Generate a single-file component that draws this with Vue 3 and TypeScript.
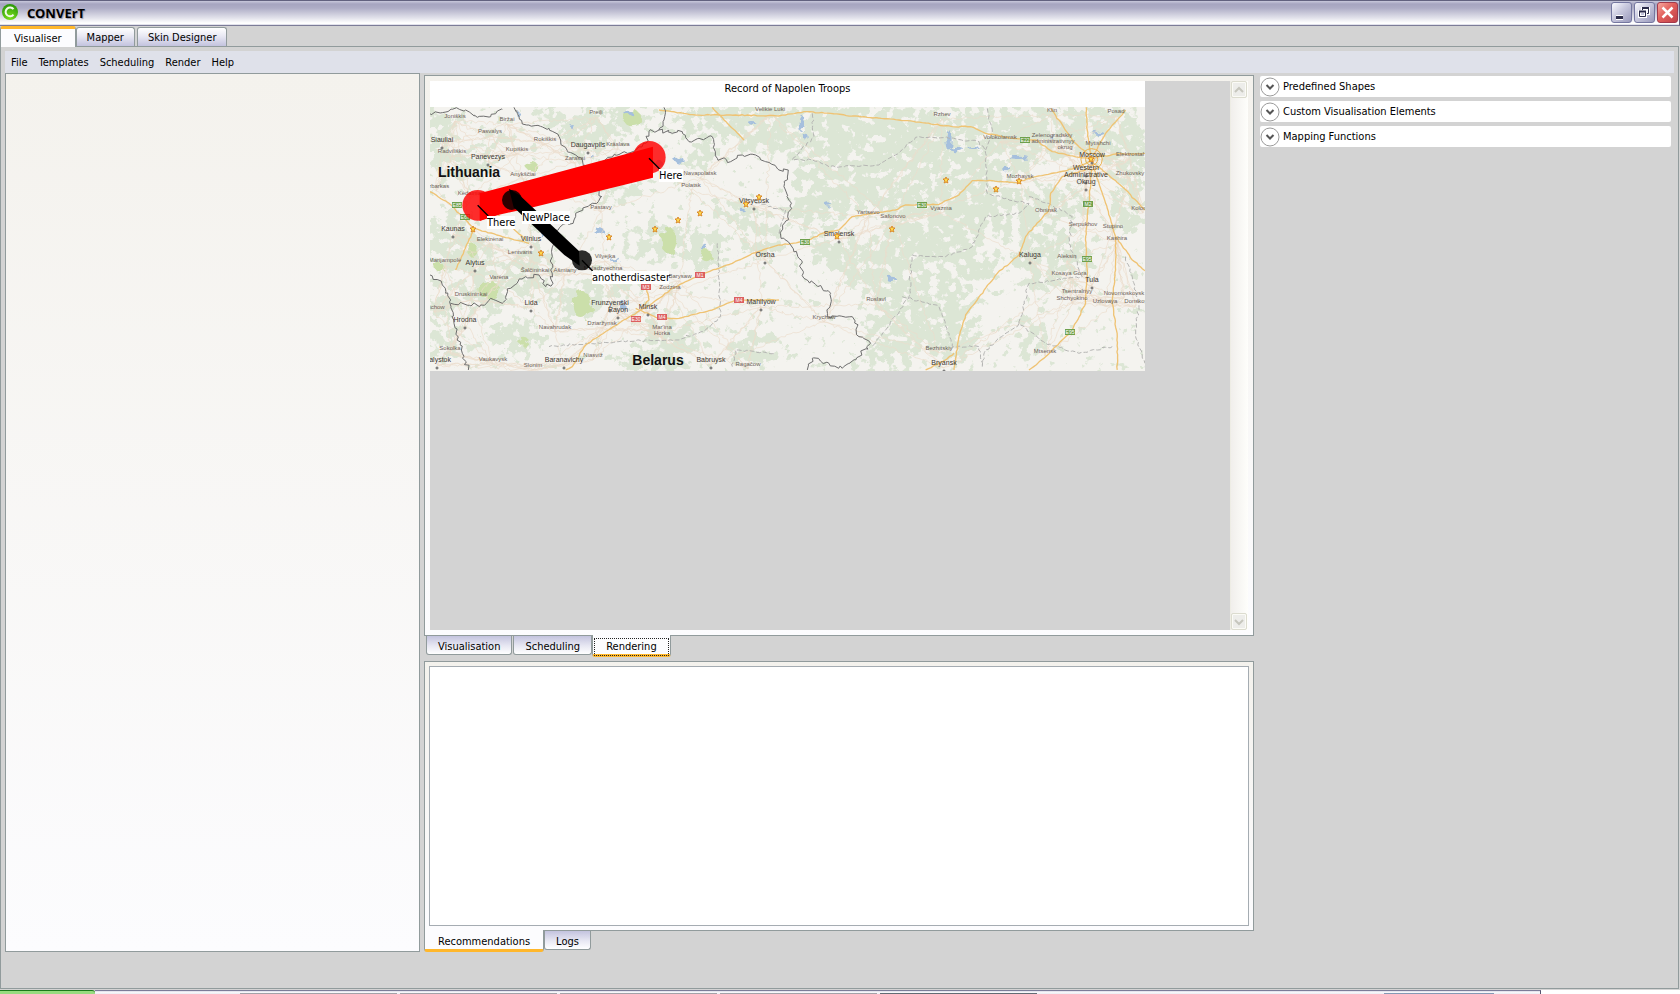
<script setup lang="ts">
import { ref } from 'vue'

interface Place { x: number; y: number; name: string; major?: boolean }
type Point = [number, number]

const pageTabs = ['Visualiser', 'Mapper', 'Skin Designer']
const pageTab = ref('Visualiser')
const menus = ['File', 'Templates', 'Scheduling', 'Render', 'Help']
const viewTabs = ['Visualisation', 'Scheduling', 'Rendering']
const viewTab = ref('Rendering')
const outputTabs = ['Recommendations', 'Logs']
const outputTab = ref('Recommendations')
const groups = ['Predefined Shapes', 'Custom Visualisation Elements', 'Mapping Functions']
const taskSlots = [1, 2, 3, 4, 5]
const notes = ref('')

const places: Place[] = [
  { x: 25, y: 11, name: 'Joniškis' }, { x: 77, y: 14, name: 'Biržai' }, { x: 60, y: 26, name: 'Pasvalys' },
  { x: 12, y: 35, name: 'Siauliai', major: true }, { x: 22, y: 46, name: 'Radviliškis' },
  { x: 58, y: 52, name: 'Panevezys', major: true }, { x: 115, y: 34, name: 'Rokiškis' },
  { x: 87, y: 44, name: 'Kupiškis' }, { x: 158, y: 40, name: 'Daugavpils', major: true },
  { x: 188, y: 39, name: 'Krāslava' }, { x: 145, y: 53, name: 'Zarasai' }, { x: 93, y: 69, name: 'Anykščiai' },
  { x: 166, y: 7, name: 'Preiļi' }, { x: 6, y: 81, name: 'Jurbarkas' }, { x: 40, y: 88, name: 'Kėdainiai' },
  { x: 23, y: 124, name: 'Kaunas', major: true }, { x: 60, y: 134, name: 'Elektrėnai' },
  { x: 101, y: 134, name: 'Vilnius', major: true }, { x: 90, y: 147, name: 'Lentvaris' },
  { x: 15, y: 155, name: 'Marijampolė' }, { x: 45, y: 158, name: 'Alytus', major: true },
  { x: 105, y: 165, name: 'Šalčininkai' }, { x: 135, y: 165, name: 'Ašmiany' }, { x: 69, y: 172, name: 'Varėna' },
  { x: 41, y: 189, name: 'Druskininkai' }, { x: 101, y: 198, name: 'Lida', major: true },
  { x: 35, y: 215, name: 'Hrodna', major: true }, { x: 4, y: 202, name: 'Suchow' },
  { x: 20, y: 243, name: 'Sokolka' }, { x: 7, y: 255, name: 'Bialystok', major: true },
  { x: 63, y: 254, name: 'Vaukavysk' }, { x: 103, y: 260, name: 'Slonim' },
  { x: 134, y: 255, name: 'Baranavichy', major: true }, { x: 163, y: 250, name: 'Niasviž' },
  { x: 125, y: 222, name: 'Navahrudak' }, { x: 172, y: 218, name: 'Dziaržynsk' },
  { x: 180, y: 198, name: 'Frunzyenski', major: true }, { x: 188, y: 205, name: 'Rayon', major: true },
  { x: 218, y: 202, name: 'Minsk', major: true }, { x: 232, y: 222, name: "Mar'ina" }, { x: 232, y: 228, name: 'Horka' },
  { x: 240, y: 182, name: 'Zodzina' }, { x: 250, y: 171, name: 'Barysaw' }, { x: 173, y: 163, name: 'Maladzyechna' },
  { x: 175, y: 151, name: 'Vilyejka' }, { x: 171, y: 102, name: 'Pastavy' }, { x: 270, y: 68, name: 'Navapolatsk' },
  { x: 261, y: 80, name: 'Polatsk' }, { x: 324, y: 96, name: 'Vitsyebsk', major: true },
  { x: 335, y: 150, name: 'Orsha', major: true }, { x: 331, y: 197, name: 'Mahilyow', major: true },
  { x: 281, y: 255, name: 'Babruysk', major: true }, { x: 318, y: 259, name: 'Ragačow' },
  { x: 340, y: 4, name: 'Velikie Luki' }, { x: 512, y: 9, name: 'Rzhev' }, { x: 570, y: 32, name: 'Volokolamsk' },
  { x: 622, y: 30, name: 'Zelenogradskiy' }, { x: 623, y: 36, name: 'administrativnyy' }, { x: 635, y: 42, name: 'okrug' },
  { x: 668, y: 38, name: 'Mytishchi' }, { x: 662, y: 50, name: 'Moscow', major: true },
  { x: 656, y: 63, name: 'Western', major: true }, { x: 656, y: 70, name: 'Administrative', major: true },
  { x: 656, y: 77, name: 'Okrug', major: true }, { x: 700, y: 49, name: 'Elektrostal' },
  { x: 700, y: 68, name: 'Zhukovsky' }, { x: 590, y: 71, name: 'Mozhaysk' }, { x: 511, y: 103, name: 'Vyazma' },
  { x: 438, y: 107, name: 'Yartsevo' }, { x: 463, y: 111, name: 'Safonovo' },
  { x: 409, y: 129, name: 'Smolensk', major: true }, { x: 616, y: 105, name: 'Obninsk' },
  { x: 653, y: 119, name: 'Serpukhov' }, { x: 683, y: 121, name: 'Stupino' }, { x: 687, y: 133, name: 'Kashira' },
  { x: 600, y: 150, name: 'Kaluga', major: true }, { x: 637, y: 151, name: 'Aleksin' },
  { x: 639, y: 168, name: 'Kosaya Gora' }, { x: 662, y: 175, name: 'Tula', major: true },
  { x: 647, y: 186, name: 'Tsentralnyy' }, { x: 642, y: 193, name: 'Shchyokino' },
  { x: 694, y: 188, name: 'Novomoskovsk' }, { x: 675, y: 196, name: 'Uzlovaya' }, { x: 706, y: 196, name: 'Donskoy' },
  { x: 446, y: 194, name: 'Roslavl' }, { x: 394, y: 212, name: 'Krychaw' }, { x: 509, y: 243, name: 'Bezhitskiy' },
  { x: 514, y: 258, name: 'Bryansk', major: true }, { x: 615, y: 246, name: 'Mtsensk' },
  { x: 713, y: 103, name: 'Kolomna' }, { x: 622, y: 5, name: 'Klin' }, { x: 686, y: 6, name: 'Posad' },
]

const stars: Point[] = [
  [43, 122], [111, 146], [179, 130], [225, 122], [248, 113], [270, 106], [316, 97], [329, 90],
  [407, 129], [462, 122], [516, 73], [566, 82], [589, 74], [661, 52],
]
const shields: { x: number; y: number; name: string; red?: boolean }[] = [
  { x: 27, y: 98, name: 'E85' }, { x: 35, y: 110, name: 'E67' },
  { x: 270, y: 168, name: 'M1', red: true }, { x: 216, y: 180, name: 'M3', red: true },
  { x: 206, y: 212, name: 'E30', red: true }, { x: 232, y: 210, name: 'M4', red: true },
  { x: 309, y: 193, name: 'M4', red: true }, { x: 375, y: 135, name: 'E30' }, { x: 492, y: 98, name: 'E30' },
  { x: 595, y: 33, name: 'E22' }, { x: 658, y: 97, name: 'M2' }, { x: 657, y: 152, name: 'E95' }, { x: 640, y: 225, name: 'E95' },
]

let seed = 7
function rand(): number {
  seed = (seed * 16807) % 2147483647
  return seed / 2147483647
}

// Roughens a polyline so that it reads as a surveyed line
function rough(points: Point[], amount: number): string {
  let d = `M${points[0][0]} ${points[0][1]}`
  for (let i = 1; i < points.length; i++) {
    const [ax, ay] = points[i - 1]
    const [bx, by] = points[i]
    const steps = Math.max(1, Math.round(Math.hypot(bx - ax, by - ay) / 9))
    for (let s = 1; s <= steps; s++) {
      const t = s / steps
      const k = s === steps ? 0 : amount
      d += `L${(ax + (bx - ax) * t + (rand() - 0.5) * k).toFixed(1)} ${(ay + (by - ay) * t + (rand() - 0.5) * k).toFixed(1)}`
    }
  }
  return d
}
function parse(s: string): Point[] {
  return s.split(' ').map((p) => p.split(',').map(Number) as Point)
}

const borders = [
  '33,130 70,128 100,118 140,120 175,142 215,140 250,118',
  '285,112 300,140 310,162 390,175 425,210 445,245 490,270 505,300 530,340 548,380 520,400 470,430 465,450 405,480 400,560 395,600 402,640 380,650 360,615 320,620 275,655 250,700 215,685 185,705 95,700',
  '735,112 735,150 720,180 690,185 680,220 650,240 570,262 530,290 495,285',
  '720,180 760,190 790,185 810,215 840,205 880,200 895,265 935,275 970,255 1010,255 1040,275 1080,300 1108,300 1095,350 1118,415 1085,495 1115,525 1140,565 1155,625 1235,670 1225,740 1300,740 1315,770 1320,800 1355,820 1310,870 1270,895 1230,880 1180,865 1165,900',
  '33,615 70,645 95,690 105,760 130,850 148,900',
].map((s) => rough(parse(s), 12))

const regions = [
  '1180,130 1185,200 1120,270 1180,270 1230,290 1380,285 1420,260 1500,200 1590,205 1680,215 1700,250 1705,370 1770,390 1830,400 1800,430 1700,440 1660,530 1580,560 1480,555 1470,680 1400,780 1360,830',
  '1450,680 1560,710 1590,790 1600,830 1680,830 1690,890',
  '1705,115 1720,180 1700,240', '1830,380 1890,400 1960,440 1950,520 1990,620 1830,640 1800,760 1880,820 1980,850 2080,830',
  '1800,760 1700,840 1690,890', '2120,560 2140,620 2160,700 2150,800 2178,880',
  '895,520 905,740 860,780 770,810 600,815 500,820 390,830', '1080,490 1100,420 1010,400', '940,890 950,840 1070,850',
].map((s) => rough(parse(s), 7))

const highways = [
  '720,120 830,135 950,135 1080,138 1155,125 1235,130 1300,138 1440,150 1510,158 1600,170 1655,170 1700,190 1780,205',
  '1780,205 1850,210 1900,245 1980,262 2010,265',
  '1080,525 1160,515 1210,490 1260,480 1300,440 1430,420 1460,405 1560,403 1620,375 1660,332 1720,332 1790,338 1850,320 1960,297 2010,275',
  '1080,525 1000,550 940,580 840,615 760,655 700,700 600,760 545,795 500,825 460,890 440,900',
  '650,715 720,745 780,745 880,720 950,690 1080,690', '680,640 690,690 665,712',
  '2000,300 1930,320 1895,370 1890,420 1820,500 1800,555 1735,610 1640,735 1620,800 1605,900',
  '1895,115 1960,210 2015,260', '2002,112 2005,180 2015,250', '2120,120 2060,190 2025,255', '2178,250 2090,252 2020,265',
  '2020,275 2110,350 2178,420', '2020,280 2060,400 2090,500 2090,600 2080,700 2095,800 2095,900',
  '2090,500 2140,570 2178,602', '2018,300 2010,400 2000,500 2005,600 2000,700 1960,780 1880,860 1830,900',
  '880,112 940,175 975,210', '33,365 90,400 165,475 250,500 330,520', '165,475 110,600', '200,400 320,510',
  '1605,850 1580,870 1520,900',
].map((s) => rough(parse(s), 3))

const toSheet = (x: number, y: number): Point => [x * 3 + 33, y * 3 + 111]

// Minor roads link every place with its nearest neighbours
const lanes: string[] = []
for (const a of places) {
  const near = places
    .filter((b) => b !== a)
    .sort((b, c) => Math.hypot(b.x - a.x, b.y - a.y) - Math.hypot(c.x - a.x, c.y - a.y))
  for (const k of [1, 3, 5, 7]) lanes.push(rough([toSheet(a.x, a.y + 3), toSheet(near[k].x, near[k].y + 3)], 10))
}

// Centre and radii of wooded areas
const woods: number[][] = [
  [70, 160, 60, 40], [60, 230, 40, 60], [140, 290, 90, 50], [230, 200, 60, 30], [90, 520, 90, 90], [170, 560, 70, 60],
  [200, 670, 90, 60], [60, 700, 60, 60], [330, 640, 80, 40], [420, 150, 90, 40], [560, 170, 80, 60], [640, 140, 60, 50],
  [480, 230, 60, 40], [600, 330, 80, 60], [860, 150, 100, 60], [1000, 150, 130, 60], [1040, 210, 80, 50], [850, 260, 60, 40],
  [720, 520, 100, 60], [860, 540, 70, 70], [480, 690, 80, 60], [600, 650, 70, 40], [280, 800, 100, 60], [70, 820, 60, 60],
  [760, 800, 100, 60], [700, 870, 120, 40], [1000, 830, 80, 60], [1030, 500, 60, 80], [950, 430, 60, 40], [340, 560, 70, 60],
  [1190, 180, 130, 90], [1350, 190, 160, 90], [1500, 190, 130, 80], [1250, 330, 130, 80], [1420, 330, 120, 90],
  [1600, 270, 120, 90], [1250, 400, 110, 50], [1560, 450, 170, 100], [1700, 410, 130, 80], [1490, 520, 120, 70],
  [1420, 620, 110, 80], [1330, 580, 80, 70], [1560, 690, 100, 70], [1450, 760, 120, 90], [1600, 790, 90, 90],
  [1660, 590, 90, 60], [1750, 240, 110, 90], [1880, 190, 120, 90], [2060, 190, 120, 90], [2140, 280, 70, 100],
  [1900, 400, 120, 60], [1850, 530, 80, 90], [1960, 560, 60, 70], [1870, 650, 60, 40], [2120, 430, 60, 60],
  [1400, 870, 90, 40], [1830, 800, 60, 50], [1230, 540, 70, 60], [1160, 430, 60, 50], [1720, 140, 120, 40],
]
const parks: number[][] = [
  [640, 145, 28, 24], [750, 512, 22, 40], [862, 556, 17, 18], [210, 660, 32, 28], [490, 705, 26, 42], [160, 540, 16, 20],
  [315, 815, 16, 12], [340, 290, 18, 14], [60, 590, 14, 12],
]
const lakes: number[][] = [
  [628, 128, 12, 6], [720, 282, 12, 10], [780, 270, 14, 8], [540, 482, 16, 10], [855, 530, 7, 12], [610, 705, 7, 18],
  [1148, 160, 9, 26], [1160, 200, 6, 9], [1590, 210, 8, 32], [1615, 240, 20, 7], [1665, 235, 16, 5], [1800, 262, 30, 5],
  [1765, 300, 12, 7], [1418, 628, 14, 8], [370, 490, 8, 9], [300, 135, 5, 8], [460, 170, 7, 5], [590, 572, 16, 4],
  [1230, 405, 9, 5], [2038, 190, 18, 5], [1000, 160, 10, 4], [970, 420, 8, 4], [1900, 205, 6, 16], [520, 262, 8, 6],
]
const starPath = 'M0 -3L1 -1L3 -1L1 1L2 3L0 2L-2 3L-1 1L-3 -1L-1 -1Z'
</script>

<template>
  <div class="window">
    <header class="titlebar">
      <svg class="logo" width="18" height="18" viewBox="0 0 18 18" aria-hidden="true">
        <defs>
          <radialGradient id="orb" cx="50%" cy="85%" r="80%">
            <stop offset="0" stop-color="#7be01c" /><stop offset="1" stop-color="#2e9a0b" />
          </radialGradient>
        </defs>
        <circle cx="9" cy="8" r="8" fill="url(#orb)" />
        <path d="M12.500 5.200A4.400 4.400 0 1 0 12.500 10.600" fill="none" stroke="#f2fbe9" stroke-width="2" />
      </svg>
      <h1>CONVErT</h1>
      <div class="controls">
        <button type="button" class="ctl" aria-label="Minimise">
          <svg width="19" height="19" viewBox="0 0 19 19"><path d="M4 14.500h7" stroke="#fff" stroke-width="5" /><path d="M4 14.500h7" stroke="#2b2b4a" stroke-width="3" /></svg>
        </button>
        <button type="button" class="ctl" aria-label="Restore">
          <svg width="19" height="19" viewBox="0 0 19 19" fill="none">
            <path d="M7.500 7V5.500h6v5H12M4.500 8.500h6v5h-6z" stroke="#fff" stroke-width="3" />
            <path d="M7.500 7V5.500h6v5H12M4.500 8.500h6v5h-6z" stroke="#2b2b4a" />
            <path d="M7 5h7M4 8.500h7" stroke="#2b2b4a" stroke-width="2" />
          </svg>
        </button>
        <button type="button" class="ctl close" aria-label="Close">
          <svg width="19" height="19" viewBox="0 0 19 19"><path d="M4.500 4.500l10 10M14.500 4.500l-10 10" stroke="#fff" stroke-width="2.500" /></svg>
        </button>
      </div>
    </header>

    <div class="tabs top" role="tablist">
      <button v-for="t in pageTabs" :key="t" type="button" role="tab" class="tab" :class="{ on: t === pageTab }" :aria-selected="t === pageTab" @click="pageTab = t">{{ t }}</button>
    </div>

    <main class="page">
      <nav class="menu">
        <button v-for="m in menus" :key="m" type="button">{{ m }}</button>
      </nav>
      <div class="columns">
        <section class="source"></section>

        <div class="centre">
          <section class="pane view">
            <div class="stage">
              <figure class="record">
                <figcaption>Record of Napolen Troops</figcaption>
                <svg class="map" width="715" height="264" viewBox="0 0 715 264">
                  <defs>
                    <filter id="forest" x="0" y="0" width="100%" height="100%" filterUnits="userSpaceOnUse" color-interpolation-filters="sRGB">
                      <feGaussianBlur in="SourceGraphic" stdDeviation="7" result="density" />
                      <feTurbulence type="fractalNoise" baseFrequency="0.11" numOctaves="4" seed="11" />
                      <feColorMatrix values="0 0 0 0 0  0 0 0 0 0  0 0 0 0 0  1 0 0 0 0" result="noise" />
                      <feComposite in="density" in2="noise" operator="arithmetic" k2="0.4" k3="1" />
                      <feColorMatrix values="0 0 0 0 0.863  0 0 0 0 0.902  0 0 0 0 0.835  0 0 0 14 -9.300" />
                    </filter>
                    <filter id="ragged" x="-5%" y="-5%" width="110%" height="110%">
                      <feTurbulence type="fractalNoise" baseFrequency="0.15" numOctaves="2" seed="3" />
                      <feDisplacementMap in="SourceGraphic" scale="9" />
                    </filter>
                  </defs>
                  <rect width="715" height="264" fill="#f4f3ef" />
                  <g filter="url(#forest)"><g transform="translate(-11 -37) scale(.3333)">
                    <ellipse v-for="(w, i) in woods" :key="i" :cx="w[0]" :cy="w[1]" :rx="w[2]" :ry="w[3]" fill="#000" fill-opacity=".7" />
                  </g></g>
                  <g filter="url(#ragged)"><g transform="translate(-11 -37) scale(.3333)">
                    <ellipse v-for="(w, i) in parks" :key="i" :cx="w[0]" :cy="w[1]" :rx="w[2]" :ry="w[3]" fill="#cbdfaa" />
                    <ellipse v-for="(w, i) in lakes" :key="i" :cx="w[0]" :cy="w[1]" :rx="w[2]" :ry="w[3]" fill="#a5bfdd" />
                  </g></g>
                  <g transform="translate(-11 -37) scale(.3333)" fill="none" stroke-linejoin="round">
                    <path v-for="(d, i) in lanes" :key="i" :d="d" stroke="#ecdccb" stroke-width="2" />
                    <path v-for="(d, i) in regions" :key="i" :d="d" stroke="#b5b5b3" stroke-width="3" stroke-dasharray="14 6" />
                    <path v-for="(d, i) in highways" :key="i" :d="d" stroke="#efc374" stroke-width="4" />
                    <g stroke="#eab04d" stroke-width="3">
                      <circle cx="2018" cy="268" r="32" /><circle cx="2018" cy="268" r="18" /><circle cx="2018" cy="268" r="8" />
                    </g>
                    <path v-for="(d, i) in borders" :key="i" :d="d" stroke="#6c6c6c" stroke-width="3" />
                  </g>
                  <g v-for="(s, i) in shields" :key="i">
                    <rect :x="s.x - 5" :y="s.y - 3" :width="10" height="6" :fill="s.red ? '#dc5f5f' : '#6ea04c'" />
                    <text :x="s.x" :y="s.y + 2" class="shield">{{ s.name }}</text>
                  </g>
                  <g v-for="(p, i) in places" :key="i">
                    <circle v-if="p.major" :cx="p.x" :cy="p.y + 6" r="1" fill="#fff" stroke="#555" />
                    <text :x="p.x" :y="p.y" class="place" :class="{ major: p.major }">{{ p.name }}</text>
                  </g>
                  <text x="39" y="70" class="country">Lithuania</text>
                  <text x="228" y="258" class="country">Belarus</text>
                  <path v-for="(s, i) in stars" :key="i" :d="starPath" :transform="`translate(${s[0]} ${s[1]})`" fill="#ffd84a" stroke="#d98a2b" />
                  <g transform="translate(-11 -37) scale(.3333)">
                    <g fill="#f00" fill-opacity=".82"><circle cx="691" cy="262" r="49" /><circle cx="176" cy="406" r="46" /></g>
                    <path d="M182 370L702 230V323L330 415L240 434L182 453Z" fill="#f00" />
                    <path d="M270 356L302 376L480 543L482 587L436 555L284 412Z" />
                    <g fill-opacity=".82"><circle cx="279" cy="390" r="30" /><circle cx="489" cy="571" r="30" /></g>
                    <path d="M690 265l32 32M176 406l32 32M489 571l32 32" stroke="#000" stroke-width="4" />
                  </g>
                  <g fill="#fff">
                    <rect x="229" y="62" width="24" height="13" /><rect x="57" y="109" width="28" height="13" />
                    <rect x="92" y="104" width="48" height="13" /><rect x="162" y="164" width="77" height="13" />
                  </g>
                  <g class="marker">
                    <text x="229" y="72">Here</text><text x="57" y="119">There</text>
                    <text x="92" y="114">NewPlace</text><text x="162" y="174">anotherdisaster</text>
                  </g>
                </svg>
              </figure>
              <div class="scroll">
                <button type="button" aria-label="Scroll up"><svg width="10" height="8" viewBox="0 0 10 8"><path d="M1 6l4-4 4 4" fill="none" stroke="#c6c6bd" stroke-width="2" /></svg></button>
                <button type="button" aria-label="Scroll down"><svg width="10" height="8" viewBox="0 0 10 8"><path d="M1 2l4 4 4-4" fill="none" stroke="#c6c6bd" stroke-width="2" /></svg></button>
              </div>
            </div>
          </section>
          <div class="tabs bottom inset" role="tablist">
            <button v-for="t in viewTabs" :key="t" type="button" role="tab" class="tab" :class="{ on: t === viewTab, focus: t === viewTab }" :aria-selected="t === viewTab" @click="viewTab = t">{{ t }}</button>
          </div>
          <section class="pane output">
            <textarea v-model="notes" aria-label="Recommendations"></textarea>
          </section>
          <div class="tabs bottom last" role="tablist">
            <button v-for="t in outputTabs" :key="t" type="button" role="tab" class="tab" :class="{ on: t === outputTab }" :aria-selected="t === outputTab" @click="outputTab = t">{{ t }}</button>
          </div>
        </div>

        <aside class="toolbox">
          <button v-for="g in groups" :key="g" type="button" class="expander" aria-expanded="false">
            <svg width="20" height="20" viewBox="0 0 20 20" aria-hidden="true">
              <circle cx="10" cy="10" r="9" fill="#fff" stroke="#9a9a9a" /><path d="M6.500 8l3.500 3.500L13.500 8" fill="none" stroke="#555" stroke-width="2" />
            </svg>
            <span>{{ g }}</span>
          </button>
        </aside>
      </div>
    </main>

    <footer class="taskbar">
      <div class="start"></div>
      <div class="tasks"><i v-for="n in taskSlots" :key="n" :class="{ active: n === 5 }"></i></div>
      <div class="tray"></div>
      <div class="rest"></div>
    </footer>
  </div>
</template>

<style>
body { margin: 0; background: #d3d3d3; }
</style>

<style scoped>
* { box-sizing: border-box; }
.window {
  display: flex; flex-direction: column; min-height: 100vh; background: #d3d3d3; color: #000;
  font: 11px/16px "DejaVu Sans Condensed", "DejaVu Sans", sans-serif;
}
button { margin: 0; font: inherit; color: inherit; cursor: default; }
.titlebar {
  display: flex; align-items: center; height: 26px; padding: 0 1px 1px 1px;
  border-top: 1px solid #62627f; border-bottom: 1px solid #7c7c98; border-right: 1px solid #62627f;
  background: linear-gradient(#c9c9dc 0, #a6a5c0 3px, #aeadc6 7px, #e2e2eb 17px, #fff 22px, #fff 23px, #c5c5d8 24px);
}
.logo { flex: none; }
h1 { flex: 1; margin: 0 0 0 8px; font: bold 13px/20px "Noto Sans", sans-serif; text-shadow: 1px 1px 1px #9a9aae; }
.controls { display: flex; gap: 2px; }
.ctl {
  width: 21px; height: 21px; padding: 0; border: 1px solid #7577a0; border-radius: 3px;
  background: linear-gradient(135deg, #fafaff, #c9c9de 45%, #9999bb);
}
.ctl svg { display: block; }
.close { border-color: #a33a4b; background: linear-gradient(135deg, #f7a79e, #e2605c 45%, #bf4048); }

.tabs { display: flex; align-items: flex-start; }
.tab {
  height: 19px; padding: 2px 10px 0; border: 1px solid #919b9c; line-height: 16px; white-space: nowrap;
  background: linear-gradient(#fff, #e8e8f3 45%, #c3c3de);
}
.tab.on { background: #fcfcfe; position: relative; }
.top { height: 20px; align-items: flex-end; position: relative; z-index: 1; gap: 2px; }
.top .tab { border-bottom: 0; border-radius: 3px 3px 0 0; }
.top .tab.on { height: 21px; padding: 1px 13px 0; margin: 0 -2px -1px 0; border-top: 3px solid #ffb72b; }
.bottom { height: 25px; gap: 1px; }
.bottom .tab {
  display: flex; align-items: flex-start; padding: 3px 11px 0; border-top: 0; border-radius: 0 0 3px 3px;
  background: linear-gradient(#c3c3de, #e8e8f3 55%, #fff);
}
.bottom .tab.on { height: 22px; padding: 4px 13px 0; margin: -1px -1px 0; border-bottom: 3px solid #ffb72b; background: #fcfcfe; }
.bottom .tab.on:first-child { margin-left: 0; }
.last { height: 21px; }
.inset { padding-left: 2px; }
.tab.focus::after { content: ""; position: absolute; inset: 3px 1px -2px 1px; border: 1px dotted #222; }

.page { flex: 1; display: flex; flex-direction: column; margin: 0 1px 1px 0; padding: 4px 4px 36px; border: 1px solid #919b9c; }
.menu { display: flex; align-items: center; height: 22px; padding: 1px 0 0 6px; background: #dfe1ea; gap: 11px; }
.menu button { padding: 0; border: 0; background: none; }
.columns { flex: 1; display: grid; grid-template-columns: 415fr 830fr 416fr; gap: 4px; }
.source { border: 1px solid #919b9c; background: linear-gradient(#f4f2ed, #fcfcfe); }
.centre { display: flex; flex-direction: column; margin-top: 2px; min-width: 0; }
.pane { display: flex; border: 1px solid #919b9c; background: linear-gradient(#f4f2ed, #fcfcfe); min-height: 0; }
.view { flex: 562 1 0; padding: 5px; }
.output { flex: 266 1 0; padding: 4px; }
.stage { flex: 1; display: flex; justify-content: space-between; background: #d3d3d3; min-width: 0; }
.record { margin: 0; min-width: 0; overflow: hidden; }
figcaption { height: 26px; background: #fff; text-align: center; }
.map { display: block; font-family: "Liberation Sans", Arial, sans-serif; text-anchor: middle; }
.place { font-size: 6px; fill: #6d6259; }
.major { font-size: 7px; fill: #3d3833; }
.shield { font-size: 5px; fill: #fff; }
.country { font-size: 14px; font-weight: bold; fill: #111; }
.marker { font: 11px "DejaVu Sans Condensed", "DejaVu Sans", sans-serif; text-anchor: start; }
.scroll {
  display: flex; flex-direction: column; justify-content: space-between; width: 18px;
  border-left: 1px solid #eeede5; background: linear-gradient(90deg, #f1efec, #fefefb);
}
.scroll button {
  display: flex; align-items: center; justify-content: center; width: 16px; height: 17px; padding: 0;
  border: 1px solid #dcdccf; border-radius: 2px; background: #ededea; box-shadow: inset 0 0 0 1px #fbfbf6;
}
textarea { flex: 1; resize: none; border: 1px solid #a5acb2; background: #fff; font: inherit; outline: 0; }
.toolbox { display: flex; flex-direction: column; gap: 4px; padding: 3px 3px 0 2px; min-width: 0; }
.expander {
  display: flex; align-items: center; gap: 3px; height: 21px; padding: 0; border: 0; border-radius: 2px;
  background: #fff; text-align: left; white-space: nowrap;
}

.taskbar { display: flex; height: 4px; }
.start { width: 95px; border-top: 1px solid #1b7a1b; border-radius: 0 3px 0 0; background: #98dc80; }
.tasks { flex: 1289; display: flex; gap: 3px; padding-left: 145px; align-items: flex-end; }
.tasks, .tray { border-top: 1px solid #7c7c98; background: linear-gradient(#dcdce8, #fff 2px, #dfe1ea 3px); }
.tasks i { width: 157px; height: 1px; background: #a2a2a8; }
.tasks .active { background: #626c74; }
.tray { display: flex; align-items: flex-end; width: 157px; border-right: 1px solid #55556f; }
.tray::before { content: ""; width: 110px; height: 1px; background: #8499b5; }
.rest { width: 139px; background: #fff; }
</style>
